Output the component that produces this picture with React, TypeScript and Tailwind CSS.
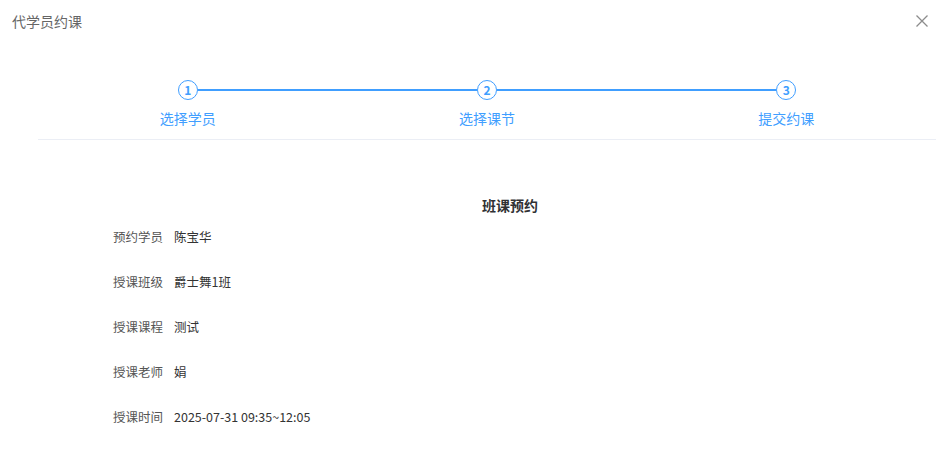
import React from 'react';

const steps = ['选择学员', '选择课节', '提交约课'];

const rows = [
  { label: '预约学员', value: '陈宝华' },
  { label: '授课班级', value: '爵士舞1班' },
  { label: '授课课程', value: '测试' },
  { label: '授课老师', value: '娟' },
  { label: '授课时间', value: '2025-07-31 09:35~12:05' },
];

export default function App() {
  return (
    <div
      className="w-[946px] h-[467px] bg-white overflow-hidden"
      style={{ fontFamily: '"Noto Sans CJK SC", "Liberation Sans", sans-serif' }}
    >
      {/* header */}
      <div className="flex items-center justify-between h-[42px] pl-3 pr-[18px]">
        <span className="text-[14px] text-[#666666]">代学员约课</span>
        <svg width="12" height="12" viewBox="0 0 12 12" className="text-[#8c8c8c]">
          <path d="M0.5 0.5L11.5 11.5M11.5 0.5L0.5 11.5" stroke="currentColor" strokeWidth="1.3" />
        </svg>
      </div>

      {/* steps */}
      <div className="ml-[38px] mr-[10px] mt-[38px] pb-[11px] border-b border-[#ebeef5] flex">
        {steps.map((s, i) => (
          <div key={s} className="flex-1 flex flex-col items-center">
            <div className="w-full flex items-center">
              <div className={`flex-1 h-[2px] ${i === 0 ? 'bg-transparent' : 'bg-[#409eff]'}`} />
              <div className="w-[20px] h-[20px] rounded-full border border-[#409eff] bg-white flex items-center justify-center text-[12px] font-bold text-[#409eff] leading-none">
                {i + 1}
              </div>
              <div className={`flex-1 h-[2px] ${i === steps.length - 1 ? 'bg-transparent' : 'bg-[#409eff]'}`} />
            </div>
            <div className="mt-2 text-[14px] leading-[20px] text-[#409eff]">{s}</div>
          </div>
        ))}
      </div>

      {/* content */}
      <div className="ml-[84px] mr-[10px] mt-[55px]">
        <div className="text-center text-[14px] leading-[20px] font-bold text-[#303133]">班课预约</div>
        <div className="mt-3 pl-[29px] flex flex-col gap-[25px]">
          {rows.map((r) => (
            <div key={r.label} className="flex items-center h-[20px] text-[12.5px]">
              <span className="w-[61px] text-[#555555]">{r.label}</span>
              <span className="text-[#333333]">{r.value}</span>
            </div>
          ))}
        </div>
      </div>
    </div>
  );
}
